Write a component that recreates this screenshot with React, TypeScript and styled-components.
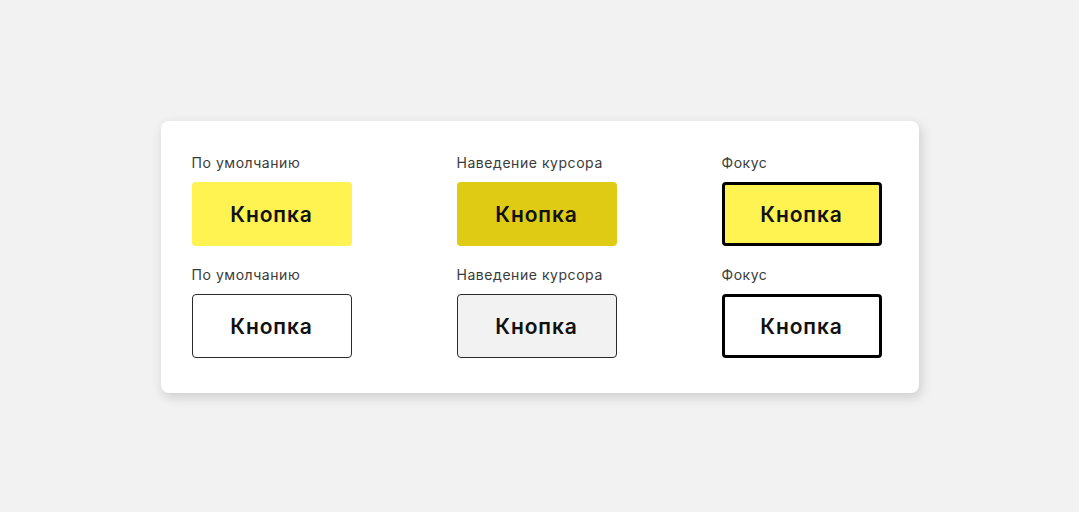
import React from "react";
import styled, { createGlobalStyle, css } from "styled-components";

const Global = createGlobalStyle`
  html, body { margin: 0; padding: 0; background: #f2f2f2; }
  body { font-family: "Inter", "Noto Sans", sans-serif; }
`;

const Page = styled.div`
  min-height: 512px;
  box-sizing: border-box;
  padding-top: 2px;
  display: flex;
  align-items: center;
  justify-content: center;
`;

const Card = styled.div`
  width: 758px;
  box-sizing: border-box;
  background: #ffffff;
  border-radius: 8px;
  box-shadow: 2px 4px 12px rgba(0, 0, 0, 0.16);
  padding: 33px 37px 35px 31px;
  display: grid;
  grid-template-columns: repeat(3, 160px);
  column-gap: 105px;
  row-gap: 20px;
`;

const Cell = styled.div`
  display: flex;
  flex-direction: column;
  gap: 11px;
`;

const Label = styled.div`
  font-size: 14px;
  line-height: 17px;
  letter-spacing: 0.55px;
  color: #3a3a3a;
  white-space: nowrap;
`;

type Variant = "primary" | "primaryHover" | "primaryFocus" | "secondary" | "secondaryHover" | "secondaryFocus";

const variants: Record<Variant, ReturnType<typeof css>> = {
  primary: css`background: #fff352; border: 0;`,
  primaryHover: css`background: #e0cb14; border: 0;`,
  primaryFocus: css`background: #fff352; border: 3px solid #000;`,
  secondary: css`background: #fff; border: 1px solid #2a2a2a;`,
  secondaryHover: css`background: #f2f2f2; border: 1px solid #2a2a2a;`,
  secondaryFocus: css`background: #fff; border: 3px solid #000;`,
};

const Button = styled.button<{ $variant: Variant }>`
  width: 160px;
  height: 64px;
  box-sizing: border-box;
  border-radius: 4px;
  display: flex;
  align-items: center;
  justify-content: center;
  font-family: "Inter", "Noto Sans", sans-serif;
  font-size: 21px;
  font-weight: 600;
  letter-spacing: 0.9px;
  color: #111;
  padding: 0;
  ${(p) => variants[p.$variant]}
`;

const items: { label: string; variant: Variant }[] = [
  { label: "По умолчанию", variant: "primary" },
  { label: "Наведение курсора", variant: "primaryHover" },
  { label: "Фокус", variant: "primaryFocus" },
  { label: "По умолчанию", variant: "secondary" },
  { label: "Наведение курсора", variant: "secondaryHover" },
  { label: "Фокус", variant: "secondaryFocus" },
];

export default function App() {
  return (
    <>
      <Global />
      <Page>
        <Card>
          {items.map((it, i) => (
            <Cell key={i}>
              <Label>{it.label}</Label>
              <Button $variant={it.variant}>Кнопка</Button>
            </Cell>
          ))}
        </Card>
      </Page>
    </>
  );
}
